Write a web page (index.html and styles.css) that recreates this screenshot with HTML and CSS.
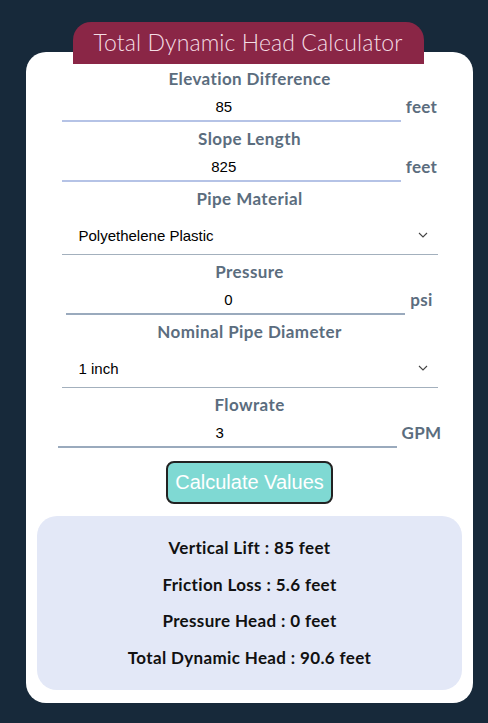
FILE: index.html
```html
<html>
<head>
  <meta charset="UTF-8">
  <meta name="viewport" content="width=device-width, initial-scale=1.0">
  <title>Total Dynamic Head Calculator</title>
  <link rel="stylesheet" href="styles.css">
</head>
<body>
  <div class="calculator">
    <h1 class="calc-title">Total Dynamic Head Calculator</h1>

    <div class="calc-card">
      <form id="tdh-form">
        <div class="field">
          <label for="elevation">Elevation Difference</label>
          <div class="input-row">
            <input type="number" id="elevation" class="num-input" value="85">
            <span class="unit">feet</span>
          </div>
        </div>

        <div class="field">
          <label for="slope">Slope Length</label>
          <div class="input-row">
            <input type="number" id="slope" class="num-input" value="825">
            <span class="unit">feet</span>
          </div>
        </div>

        <div class="field">
          <label for="material">Pipe Material</label>
          <div class="select-wrap">
            <select id="material" class="select-input">
              <option>Polyethelene Plastic</option>
              <option>PVC</option>
              <option>Steel</option>
            </select>
            <svg class="chevron" width="10" height="6" viewBox="0 0 10 6">
              <path d="M1 1l4 4 4-4" fill="none" stroke="#444" stroke-width="1.1"/>
            </svg>
          </div>
        </div>

        <div class="field">
          <label for="pressure">Pressure</label>
          <div class="input-row">
            <input type="number" id="pressure" class="num-input dim" value="0">
            <span class="unit">psi</span>
          </div>
        </div>

        <div class="field">
          <label for="diameter">Nominal Pipe Diameter</label>
          <div class="select-wrap">
            <select id="diameter" class="select-input">
              <option>1 inch</option>
              <option>1.25 inch</option>
              <option>1.5 inch</option>
              <option>2 inch</option>
            </select>
            <svg class="chevron" width="10" height="6" viewBox="0 0 10 6">
              <path d="M1 1l4 4 4-4" fill="none" stroke="#444" stroke-width="1.1"/>
            </svg>
          </div>
        </div>

        <div class="field">
          <label for="flowrate">Flowrate</label>
          <div class="input-row">
            <input type="number" id="flowrate" class="num-input dim" value="3">
            <span class="unit">GPM</span>
          </div>
        </div>

        <div class="actions">
          <button type="submit" class="btn-calc">Calculate Values</button>
        </div>
      </form>

      <div class="results">
        <p>Vertical Lift : <span id="lift">85</span> feet</p>
        <p>Friction Loss : <span id="friction">5.6</span> feet</p>
        <p>Pressure Head : <span id="phead">0</span> feet</p>
        <p>Total Dynamic Head : <span id="tdh">90.6</span> feet</p>
      </div>
    </div>
  </div>
</body>
</html>
```

FILE: styles.css
```css
:root {
  --navy: #17293a;
  --maroon: #8a2646;
  --label: #5b6d7e;
  --line: #b5c3e6;
  --line-dim: #9aaabd;
  --teal: #7fd9d3;
  --result-bg: #e3e8f7;
}

* {
  margin: 0;
  padding: 0;
  box-sizing: border-box;
}

body {
  background: var(--navy);
  font-family: 'Lato', 'Liberation Sans', sans-serif;
}

.calculator {
  width: 447px;
  margin: 22px 0 0 26px;
  display: flex;
  flex-direction: column;
  align-items: center;
}

.calc-title {
  position: relative;
  z-index: 1;
  width: 351px;
  height: 42px;
  margin-left: -3px;
  background: var(--maroon);
  border-radius: 18px 18px 0 0;
  color: #f4dde4;
  font-weight: 300;
  font-size: 23px;
  line-height: 40px;
  text-align: center;
  letter-spacing: 0.1px;
}

.calc-card {
  width: 100%;
  margin-top: -12px;
  padding: 16px 11px 13px;
  background: #fff;
  border-radius: 20px;
}

.field {
  display: flex;
  flex-direction: column;
  align-items: center;
}

.field label {
  display: block;
  margin-top: 6px;
  line-height: 22px;
  font-size: 17px;
  font-weight: 700;
  letter-spacing: 0.4px;
  color: var(--label);
}

.field:first-child label {
  margin-top: 0;
}

.input-row {
  display: flex;
  align-items: center;
  gap: 5px;
}

.num-input {
  width: 339px;
  height: 32px;
  border: none;
  border-bottom: 2px solid var(--line);
  background: transparent;
  font-family: 'Liberation Sans', Arial, sans-serif;
  font-size: 15px;
  color: #000;
  text-align: center;
  padding-top: 3px;
}

.num-input.dim {
  border-bottom-color: var(--line-dim);
}

.num-input:focus {
  outline: none;
}

.unit {
  padding-top: 1px;
  font-size: 17px;
  font-weight: 700;
  letter-spacing: 0.3px;
  color: var(--label);
}

.select-wrap {
  position: relative;
  width: 376px;
  margin-top: 4px;
}

.select-input {
  appearance: none;
  -webkit-appearance: none;
  display: block;
  width: 100%;
  height: 41px;
  padding: 3px 17px 0;
  border: none;
  border-bottom: 1px solid #a3b0bd;
  border-radius: 0;
  background: #fff;
  font-family: 'Liberation Sans', Arial, sans-serif;
  font-size: 15px;
  color: #000;
}

.select-input:focus {
  outline: none;
}

.chevron {
  position: absolute;
  right: 10px;
  top: 18px;
  pointer-events: none;
}

.actions {
  display: flex;
  justify-content: center;
  margin-top: 13px;
}

.btn-calc {
  width: 167px;
  height: 43px;
  background: var(--teal);
  border: 2px solid #222;
  border-radius: 8px;
  color: #fff;
  font-family: 'Liberation Sans', Arial, sans-serif;
  font-size: 20px;
  cursor: pointer;
}

.results {
  margin-top: 12px;
  padding: 14px 0;
  background: var(--result-bg);
  border-radius: 20px;
  text-align: center;
}

.results p {
  line-height: 36.5px;
  font-size: 17px;
  font-weight: 700;
  letter-spacing: 0.35px;
  color: #111;
}
```
